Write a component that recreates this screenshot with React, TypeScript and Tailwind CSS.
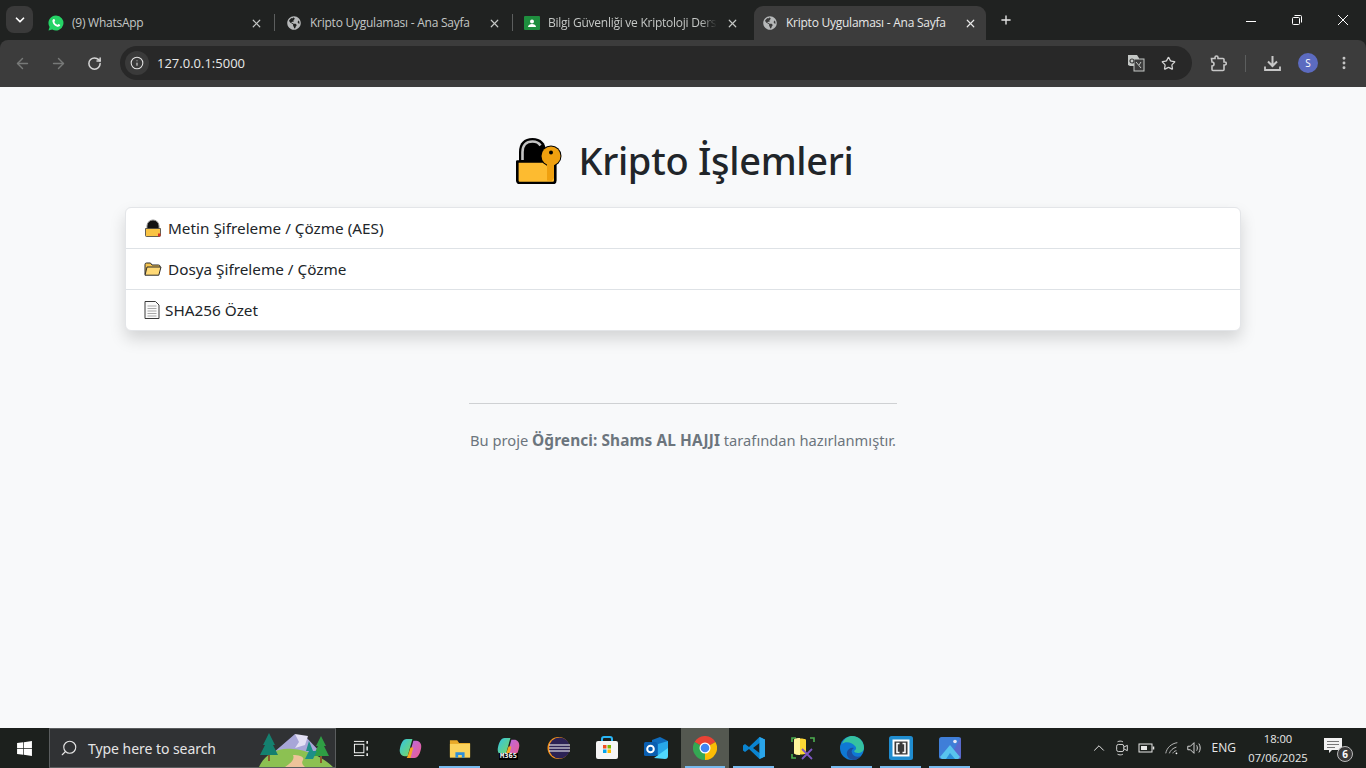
import {
  ArrowLeft,
  ArrowRight,
  ChevronDown,
  ChevronUp,
  EllipsisVertical,
  Info,
  Plus,
  RotateCw,
  Search,
  Star,
  X,
} from "lucide-react"
import { FaGlobeAmericas, FaWindows } from "react-icons/fa"
import type { ReactNode } from "react"

const Tab = ({
  icon,
  title,
  active,
  divider,
  clipped,
}: {
  icon: ReactNode
  title: string
  active?: boolean
  divider?: boolean
  clipped?: boolean
}) => (
  <div
    className={
      active
        ? "relative flex h-[34px] w-[232px] shrink-0 items-center rounded-t-[9px] bg-[#3c3c3c] pr-[9px] pl-[8px] text-[#e8e8e8]"
        : "relative flex h-[34px] w-[238px] shrink-0 items-center pr-[15px] pl-[8px] text-[#c4c7c5]"
    }
  >
    <span className="flex w-[16px] shrink-0 items-center justify-center">{icon}</span>
    <span className="ml-[7px] flex-1 overflow-hidden text-[12px] leading-4 tracking-[-0.25px] whitespace-nowrap">
      <span className={clipped ? "block w-[170px] overflow-hidden pl-px [mask-image:linear-gradient(to_right,black_90%,transparent)]" : "block pl-px"}>
        {title}
      </span>
    </span>
    <X className="size-[13px] shrink-0" strokeWidth={2.2} />
    {divider && <span className="absolute top-[8px] right-[3px] h-[17px] w-px bg-[#5c5e5e]" />}
  </div>
)

const Globe = () => <FaGlobeAmericas className="size-[14px] text-[#b6b8b9]" />

const WhatsAppIcon = () => (
  <svg viewBox="0 0 16 16" className="size-[16px]">
    <path d="M8 .5a7.500 7.500 0 0 0-6.400 11.400L.5 15.500l3.700-1A7.500 7.500 0 1 0 8 .5z" fill="#25d366" />
    <path d="M5.700 4c-.9.4-1.500 1.300-1.200 2.700.5 2.300 2.500 4.400 4.800 5 1.400.3 2.400-.2 2.800-1.100.1-.4.1-.7 0-.8l-1.800-.9-.9 1c-1.400-.5-2.600-1.700-3.100-3.100l.9-.8-.8-1.900c-.2-.1-.4-.1-.7-.1z" fill="#fff" />
  </svg>
)

const TabStrip = () => (
  <div className="flex h-[40px] bg-[#202221] pt-[6px] font-['Open_Sans',sans-serif]">
    <div className="ml-[6px] flex size-[27px] shrink-0 items-center justify-center rounded-[8px] bg-[#3a3a3a] text-white">
      <ChevronDown className="size-[14px]" strokeWidth={3} />
    </div>
    <div className="ml-[7px] flex">
      <Tab icon={<WhatsAppIcon />} title="(9) WhatsApp" divider />
      <Tab icon={<Globe />} title="Kripto Uygulaması - Ana Sayfa" divider />
      <Tab
        icon={
          <svg viewBox="0 0 16 14" className="h-[14px] w-[16px]">
            <rect width="16" height="14" rx="1" fill="#1e8e3e" />
            <circle cx="8" cy="5.500" r="2" fill="#fff" />
            <path d="M4 11c0-2 2-3 4-3s4 1 4 3z" fill="#fff" />
          </svg>
        }
        title="Bilgi Güvenliği ve Kriptoloji Dersi"
        clipped
      />
      <Tab icon={<Globe />} title="Kripto Uygulaması - Ana Sayfa" active />
    </div>
    <Plus className="mt-[7px] ml-[13px] size-[14px] text-[#e3e3e3]" strokeWidth={2.4} />
    <div className="ml-auto flex h-[28px] items-center pr-[18px]">
      <svg viewBox="0 0 10 10" className="size-[10px]" stroke="#fff" fill="none" strokeWidth="1">
        <path d="M0 6.500h10" />
      </svg>
      <svg viewBox="0 0 10 10" className="ml-[36px] size-[10px]" stroke="#fff" fill="none" strokeWidth="1">
        <rect x=".5" y="2.500" width="7" height="7" rx="1" />
        <path d="M2.500 .5h6a1 1 0 0 1 1 1v6" />
      </svg>
      <svg viewBox="0 0 10 10" className="ml-[36px] size-[10px]" stroke="#fff" fill="none" strokeWidth="1">
        <path d="M0 0l10 10M10 0L0 10" />
      </svg>
    </div>
  </div>
)

const Toolbar = () => (
  <div className="flex h-[47px] items-center rounded-t-[8px] bg-[#3c3c3c] pb-px font-['Open_Sans',sans-serif]">
    <ArrowLeft className="ml-[14px] size-[17px] text-[#777978]" strokeWidth={2} />
    <ArrowRight className="ml-[19px] size-[17px] text-[#777978]" strokeWidth={2} />
    <RotateCw className="ml-[20px] size-[15px] text-[#d5d5d5]" strokeWidth={2.4} />
    <div className="ml-[18px] flex h-[34px] w-[1072px] items-center rounded-full bg-[#282828]">
      <span className="ml-[5px] flex size-[24px] items-center justify-center rounded-full bg-[#3a3a3a]">
        <Info className="size-[14px] text-[#e3e3e3]" strokeWidth={1.8} />
      </span>
      <span className="mt-px ml-[8px] text-[13px] text-[#e8e8e8]">127.0.0.1:5000</span>
      <svg viewBox="0 0 18 18" className="ml-auto size-[18px]">
        <path d="M1 1h9l2 3v8H3l-2-1z" fill="#c4c7c5" />
        <rect x="7" y="5" width="10" height="12" fill="#3c3c3c" stroke="#c4c7c5" />
        <path d="M9 8l5 6M14 8l-2 3" stroke="#c4c7c5" fill="none" />
        <circle cx="5" cy="7" r="2" fill="none" stroke="#3c3c3c" strokeWidth="1.200" />
      </svg>
      <Star className="mr-[16px] ml-[16px] size-[15px] text-[#d5d5d5]" strokeWidth={2} />
    </div>
    <svg viewBox="0 0 17 17" className="ml-[18px] size-[17px]" fill="none" stroke="#c7c7c7" strokeWidth="1.600">
      <path d="M1.500 3.500h3.500V2.500a1.500 1.500 0 0 1 3 0v1h5a1 1 0 0 1 1 1V7h.8a1.500 1.500 0 0 1 0 3h-.8v4.500a1 1 0 0 1-1 1h-10a1 1 0 0 1-1-1V11a1.500 1.500 0 0 0 0-4z" />
    </svg>
    <span className="ml-[18px] h-[17px] w-px bg-[#5c5e5e]" />
    <svg viewBox="0 0 17 17" className="ml-[18px] size-[17px]" fill="none" stroke="#c7c7c7" strokeWidth="2">
      <path d="M8.500 1v9M4 6.500l4.500 4.500L13 6.500" />
      <path d="M1 11.500v3.500h15v-3.500" strokeWidth="1.800" />
    </svg>
    <span className="ml-[17px] flex size-[20px] items-center justify-center rounded-full bg-[#5c6bc0] text-[10px] text-white">
      S
    </span>
    <EllipsisVertical className="ml-[18px] size-[16px] text-[#c7c7c7]" strokeWidth={2.4} />
  </div>
)

const BigLock = () => (
  <svg viewBox="0 0 46 46" className="size-[46px] shrink-0">
    <path d="M3 24V14C3 5 8 0 16.500 0S30 5 30 14v10z" fill="#000" />
    <path d="M6.500 22V14C6.500 7.500 10 3.500 16.500 3.500c3.500 0 6.500 1.500 8 4" fill="none" stroke="#c4c4c4" strokeWidth="2.600" />
    <path d="M1.300 23.500h38v19a2.500 2.500 0 0 1-2.500 2.500H3.800a2.500 2.500 0 0 1-2.500-2.500z" fill="#fdbb30" stroke="#000" strokeWidth="2.600" strokeLinejoin="round" />
    <circle cx="35" cy="18" r="10.500" fill="#000" />
    <path d="M31 26h7v14l-2.500 3-4.500-.5z" fill="#efa00f" />
    <circle cx="35" cy="18" r="9.500" fill="#efa00f" />
    <circle cx="35" cy="14.500" r="2" fill="#000" />
  </svg>
)

const SmallLock = () => (
  <svg viewBox="0 0 18 18" className="size-[18px] shrink-0">
    <path d="M3 10V7a6 6 0 0 1 12 0v3z" fill="#111" stroke="#8a8a8a" strokeWidth="1" />
    <path d="M1.500 9.500h15v7a1 1 0 0 1-1 1h-13a1 1 0 0 1-1-1z" fill="#f9c343" stroke="#3d3d3d" strokeWidth="0.800" />
    <path d="M14 14.500h2.500v2a1 1 0 0 1-1 1H14z" fill="#d93025" />
  </svg>
)

const FolderIcon = () => (
  <svg viewBox="0 0 18 14" className="h-[14px] w-[18px] shrink-0">
    <path d="M1 12.500V2.500A1.500 1.500 0 0 1 2.500 1h4l1.500 2h6.500A1.500 1.500 0 0 1 16 4.500V5" fill="#f5c451" stroke="#2b2b2b" strokeWidth="1" />
    <path d="M1 13.200l2-8.200H17l-2.200 8.200z" fill="#ffd976" stroke="#2b2b2b" strokeWidth="1" />
  </svg>
)

const DocIcon = () => (
  <svg viewBox="0 0 16 18" className="h-[18px] w-[16px] shrink-0">
    <path d="M1 .5h10.500L15 4v13.500H1z" fill="#fafafa" stroke="#3a3a3a" strokeWidth="1" />
    <path d="M3.500 5h9M3.500 7.500h9M3.500 10h9M3.500 12.500h9M3.500 15h9" stroke="#a8a8a8" strokeWidth="1" />
  </svg>
)

const MenuRow = ({ icon, label, gap, border }: { icon: ReactNode; label: string; gap: string; border?: boolean }) => (
  <div className={border ? "flex h-[41px] items-center border-b border-[#dee2e6] pl-[18px] text-[#212529]" : "flex h-[40px] items-center pl-[18px] text-[#212529]"}>
    {icon}
    <span className={gap}>{label}</span>
  </div>
)

const Page = () => (
  <main className="flex flex-1 flex-col items-center bg-[#f8f9fa] font-['Noto_Sans',sans-serif]">
    <h1 className="mt-[47px] flex h-[54px] items-center pl-[4px] text-[38px] font-medium tracking-[-0.3px] text-[#212529]">
      <BigLock />
      <span className="-mt-[2px] ml-[16px]">Kripto İşlemleri</span>
    </h1>
    <div className="mt-[19px] w-[1116px] rounded-[6px] border border-[#e3e5e8] bg-white text-[15.300px] shadow-[0_8px_16px_rgba(0,0,0,0.15)]">
      <MenuRow icon={<SmallLock />} label="Metin Şifreleme / Çözme (AES)" gap="ml-[6px]" border />
      <MenuRow icon={<FolderIcon />} label="Dosya Şifreleme / Çözme" gap="ml-[6px]" border />
      <MenuRow icon={<DocIcon />} label="SHA256 Özet" gap="ml-[5px]" />
    </div>
    <div className="mt-[72px] flex w-[428px] flex-col items-center">
      <div className="h-px w-full bg-[#cfd1d3]" />
      <p className="mt-[25px] text-[14.700px] whitespace-nowrap text-[#6c757d]">
        Bu proje <strong className="text-[15.400px] font-bold tracking-[0.1px]">Öğrenci: Shams AL HAJJI</strong> tarafından hazırlanmıştır.
      </p>
    </div>
  </main>
)

const Hills = () => (
  <svg viewBox="0 0 76 36" className="h-[36px] w-[76px]">
    <path d="M14 22L36 3l6 5 4-3 16 17z" fill="#a7a6d8" />
    <path d="M36 3l4 8-4 6 10-3 3-9z" fill="#e3e0f4" />
    <path d="M0 36c6-14 20-20 34-18 14 1 30 8 40 18z" fill="#8cc152" />
    <path d="M26 36c6-4 10-8 8-12 6 0 12 2 10 5-2 3 0 5 2 7z" fill="#eec39a" />
    <path d="M10 2l6 12h-2l5 10H1l5-10H4z" fill="#14806f" />
    <rect x="9" y="24" width="2" height="6" fill="#8a5a2b" />
    <path d="M62 5l5 10h-2l5 10H54l5-10h-2z" fill="#2f9e44" />
    <rect x="61" y="25" width="2" height="7" fill="#8a5a2b" />
    <path d="M50 10l4 10h4l-4 8h-8l4-8h-3z" fill="#1d8f87" />
  </svg>
)

const Copilot = () => (
  <svg viewBox="0 0 24 24" className="size-[23px]">
    <defs>
      <linearGradient id="cpa" x1="0" y1="0" x2="1" y2="1">
        <stop offset="0" stopColor="#2fc4e8" />
        <stop offset="1" stopColor="#7ed957" />
      </linearGradient>
      <linearGradient id="cpb" x1="0" y1="0" x2="1" y2="1">
        <stop offset="0" stopColor="#b36be8" />
        <stop offset="1" stopColor="#f25c8a" />
      </linearGradient>
    </defs>
    <path d="M8 2h6l-5 18H6c-4 0-6-4-5-8 1-5 3-10 7-10z" fill="url(#cpa)" />
    <path d="M16 22h-6l5-18h3c4 0 6 4 5 8-1 5-3 10-7 10z" fill="url(#cpb)" />
    <path d="M9 20l3-9h3l-3 11H8z" fill="#f5a623" />
  </svg>
)

const Explorer = () => (
  <svg viewBox="0 0 24 22" className="h-[21px] w-[22px]">
    <path d="M1 2h8l2 3h12v15H1z" fill="#e8a928" />
    <rect x="1" y="6" width="22" height="15" fill="#fbd35c" />
    <path d="M7 21v-6h10v6h-3v-3h-4v3z" fill="#2f8fd8" />
  </svg>
)

const M365 = () => (
  <span className="flex flex-col items-center">
    <Copilot />
    <span className="-mt-[6px] bg-black px-px font-['DejaVu_Sans_Mono',monospace] text-[7px] leading-[7px] font-bold text-white">M365</span>
  </span>
)

const Eclipse = () => (
  <svg viewBox="0 0 24 24" className="size-[24px]">
    <circle cx="12.500" cy="12" r="11" fill="#f7941e" />
    <circle cx="13.500" cy="12" r="10.500" fill="#2c2255" />
    <path d="M3 9h21M3 12h21M3 15h21" stroke="#fff" strokeWidth="1.200" />
  </svg>
)

const Store = () => (
  <svg viewBox="0 0 24 24" className="size-[24px]">
    <path d="M7 6V3a2 2 0 0 1 2-2h6a2 2 0 0 1 2 2v3" fill="none" stroke="#29b6f6" strokeWidth="2" />
    <rect x="1" y="5" width="22" height="18" rx="2" fill="#f5f5f5" />
    <rect x="8" y="9" width="3.500" height="3.500" fill="#f25022" />
    <rect x="12.500" y="9" width="3.500" height="3.500" fill="#7fba00" />
    <rect x="8" y="13.500" width="3.500" height="3.500" fill="#00a4ef" />
    <rect x="12.500" y="13.500" width="3.500" height="3.500" fill="#ffb900" />
  </svg>
)

const Outlook = () => (
  <svg viewBox="0 0 24 24" className="size-[24px]">
    <path d="M8 4l8-3 8 4v14H8z" fill="#0f6cbd" />
    <path d="M14 8l10-3v14H14z" fill="#28a8ea" />
    <path d="M10 22l14-10v8a3 3 0 0 1-3 3z" fill="#50d9ff" />
    <rect x="0" y="6" width="13" height="14" rx="1.500" fill="#0a5eb0" />
    <circle cx="6.500" cy="13" r="3.300" fill="none" stroke="#fff" strokeWidth="2" />
  </svg>
)

const Chrome = () => (
  <svg viewBox="0 0 24 24" className="size-[24px]">
    <path d="M12 12L1.600 6A12 12 0 0 1 22.400 6z" fill="#ea4335" />
    <path d="M12 12L22.400 6A12 12 0 0 1 12 24z" fill="#fbbc04" />
    <path d="M12 12V24A12 12 0 0 1 1.600 6z" fill="#34a853" />
    <circle cx="12" cy="12" r="5.500" fill="#fff" />
    <circle cx="12" cy="12" r="4.300" fill="#4285f4" />
  </svg>
)

const VSCode = () => (
  <svg viewBox="0 0 24 24" className="size-[24px]">
    <path d="M17.500 1L23 3.500v17L17.500 23 7 13l-4 3-2-1.500v-5L3 8l4 3zM17.500 7L11 12l6.500 5z" fill="#0a84d0" />
    <path d="M17.500 1L23 3.500v17L17.500 23z" fill="#2aa5ea" />
  </svg>
)

const DbTool = () => (
  <svg viewBox="0 0 24 24" className="size-[24px]">
    <path d="M1 6v-4h4M19 2h4v4M1 18v4h4" fill="none" stroke="#4caf50" strokeWidth="1.600" />
    <path d="M3 4c0-2 12-2 12 0v13c0 2-12 2-12 0z" fill="#fdd835" />
    <path d="M3 4c0-2 6-2 6-2v17c-3 0-6-1-6-2z" fill="#fff59d" />
    <path d="M11 13l10 10M21 13L11 23" stroke="#7e57c2" strokeWidth="1.800" />
  </svg>
)

const Edge = () => (
  <svg viewBox="0 0 24 24" className="size-[24px]">
    <circle cx="12" cy="12" r="12" fill="#0f78d4" />
    <path d="M2 8C4 2 9 0 12 0c7 0 12 5 12 12 0 3-3 5-6 5-2 0-4-1-4-2 2-1 3-3 1-5C12 6 5 5 2 8z" fill="#35c1a0" />
    <path d="M14 24c-5 0-8-4-7-8 1-3 4-5 7-4-2 1-3 3-2 5 1 3 5 5 9 3-2 2-4 4-7 4z" fill="#1c4e9e" />
  </svg>
)

const Brackets = () => (
  <svg viewBox="0 0 24 24" className="size-[24px]">
    <rect width="24" height="24" rx="2.500" fill="#1f8ccf" />
    <rect x="3.500" y="3.500" width="17" height="17" fill="#fff" />
    <rect x="5.500" y="5.500" width="13" height="13" fill="#3b3b3b" />
    <path d="M10.500 7.500H8v9h2.500M13.500 7.500H16v9h-2.500" fill="none" stroke="#fff" strokeWidth="1.600" />
  </svg>
)

const Photos = () => (
  <svg viewBox="0 0 22 22" className="size-[22px]">
    <rect width="22" height="22" rx="2.500" fill="#3f7ed8" />
    <path d="M22 0v22H10z" fill="#6b5bc4" opacity="0.6" />
    <circle cx="16" cy="4.500" r="1.800" fill="#e8e8f5" />
    <path d="M1 20L11 8l10 12-2 2H3z" fill="#58c4ee" />
    <path d="M7 22l4-6 5 6z" fill="#2b8fd8" />
  </svg>
)

const taskbarApps: { key: string; icon: ReactNode; running?: boolean; active?: boolean }[] = [
  { key: "copilot", icon: <Copilot /> },
  { key: "explorer", icon: <Explorer />, running: true },
  { key: "m365", icon: <M365 /> },
  { key: "eclipse", icon: <Eclipse /> },
  { key: "store", icon: <Store /> },
  { key: "outlook", icon: <Outlook /> },
  { key: "chrome", icon: <Chrome />, running: true, active: true },
  { key: "vscode", icon: <VSCode />, running: true },
  { key: "dbtool", icon: <DbTool /> },
  { key: "edge", icon: <Edge />, running: true },
  { key: "brackets", icon: <Brackets />, running: true },
  { key: "photos", icon: <Photos />, running: true },
]

const TaskApp = ({ icon, running, active }: { icon: ReactNode; running?: boolean; active?: boolean }) => (
  <div className={active ? "relative flex h-[40px] w-[49px] items-center justify-center border-l border-transparent bg-[#545850] bg-clip-padding" : "relative flex h-[40px] w-[49px] items-center justify-center"}>
    {icon}
    {running && <span className="absolute right-[4px] bottom-0 left-[4px] h-[2px] bg-[#76b9ed]" />}
  </div>
)

const Taskbar = () => (
  <footer className="flex h-[40px] items-center bg-[#1c201d] font-['Open_Sans',sans-serif] text-white">
    <div className="flex w-[49px] items-center justify-center">
      <FaWindows className="size-[17px]" />
    </div>
    <div className="flex h-[40px] w-[287px] items-center overflow-hidden border border-[#5a5d5e] bg-[#303234]">
      <Search className="ml-[10px] size-[18px] -scale-x-100 text-[#e5e5e5]" strokeWidth={1.500} />
      <span className="ml-[10px] font-['Noto_Sans',sans-serif] text-[14px] tracking-[-0.05px] text-[#e5e5e5]">Type here to search</span>
      <span className="mt-auto ml-auto flex"><Hills /></span>
    </div>
    <div className="flex w-[50px] items-center justify-center">
      <svg viewBox="0 0 18 18" className="size-[17px]" fill="none" stroke="#fff" strokeWidth="1">
        <path d="M1 1.500h11M1 16.500h11" />
        <rect x="1.500" y="4.500" width="10" height="9" />
        <path d="M15 1v3M15 7v4M15 14v3" strokeWidth="1.500" />
      </svg>
    </div>
    <div className="flex">
      {taskbarApps.map((app) => (
        <TaskApp key={app.key} icon={app.icon} running={app.running} active={app.active} />
      ))}
    </div>
    <div className="ml-auto flex items-center text-[#e8e8e8]">
      <ChevronUp className="size-[18px]" strokeWidth={1.300} />
      <svg viewBox="0 0 18 18" className="ml-[6px] size-[16px]" fill="none" stroke="#e8e8e8" strokeWidth="1">
        <rect x="3" y="5" width="8" height="8" rx="2" />
        <path d="M11 8l4-2v6l-4-2M4 2c2-1 4-1 6 0M4 16c2 1 4 1 6 0" />
      </svg>
      <svg viewBox="0 0 18 12" className="ml-[8px] h-[12px] w-[18px]" fill="none" stroke="#e8e8e8" strokeWidth="1">
        <rect x="1" y="2" width="13" height="8" />
        <rect x="3" y="4" width="6" height="4" fill="#e8e8e8" stroke="none" />
        <path d="M15.500 4.500v3" strokeWidth="1.500" />
      </svg>
      <svg viewBox="0 0 18 18" className="ml-[8px] size-[16px]" fill="none" stroke="#c8c8c8" strokeWidth="1">
        <path d="M2 15C3 9 8 4 15 3M6 15c1-3 4-6 8-7M10 15c0-1 2-3 4-3" />
        <circle cx="14" cy="15" r="1" fill="#fff" stroke="none" />
      </svg>
      <svg viewBox="0 0 18 18" className="ml-[6px] size-[16px]" fill="none" stroke="#e8e8e8" strokeWidth="1">
        <path d="M2 7h3l4-4v12l-4-4H2zM12 6c1 2 1 4 0 6M14.500 4c2 3 2 7 0 10" />
      </svg>
      <span className="ml-[10px] text-[12px]">ENG</span>
      <div className="ml-[6px] flex w-[72px] flex-col items-center text-[11.200px] leading-[20px]">
        <span className="-mb-px">18:00</span>
        <span>07/06/2025</span>
      </div>
      <div className="relative mr-[16px] ml-[10px] size-[26px]">
        <svg viewBox="0 0 18 16" className="absolute top-[3px] left-0 h-[16px] w-[18px]">
          <path d="M0 0h18v12H8l-3 3v-3H0z" fill="#f2f2f2" />
          <path d="M3 3.500h12M3 6.500h12M3 9.500h8" stroke="#777" strokeWidth="1" />
        </svg>
        <span className="absolute right-[-3px] bottom-[-1px] flex size-[16px] items-center justify-center rounded-full border border-[#bbb] bg-[#3a3a3a] text-[10px] leading-none font-bold text-white">6</span>
      </div>
    </div>
  </footer>
)

export default function App() {
  return (
    <div className="flex h-[768px] w-[1366px] flex-col overflow-hidden">
      <header className="shrink-0">
        <div className="bg-[#202221]">
          <TabStrip />
          <Toolbar />
        </div>
      </header>
      <Page />
      <Taskbar />
    </div>
  )
}
